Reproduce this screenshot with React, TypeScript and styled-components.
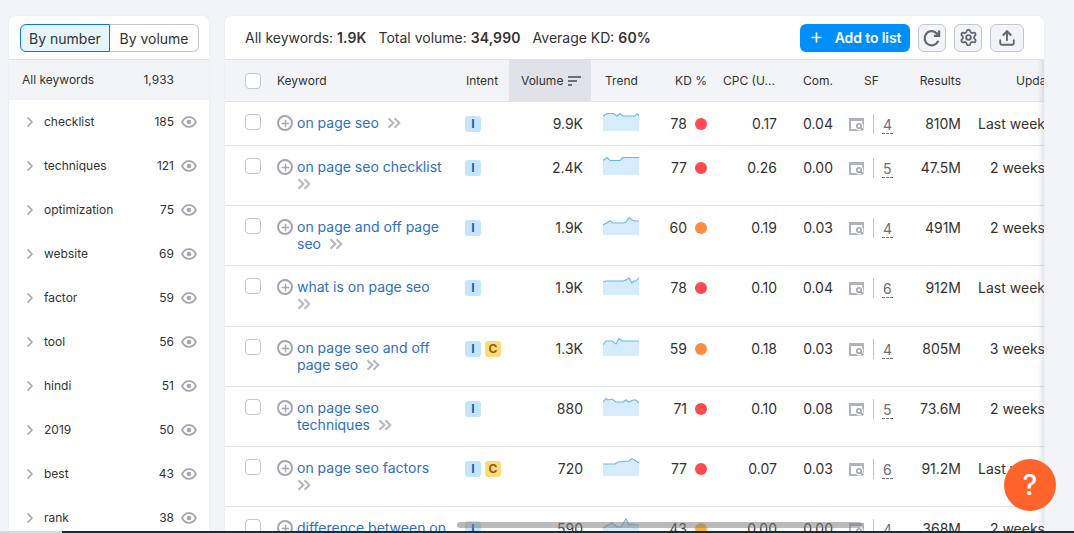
import React from "react";
import styled, { createGlobalStyle } from "styled-components";
import { Plus, ChevronRight, Settings, Upload } from "lucide-react";

const Global = createGlobalStyle`
  html, body { margin: 0; height: 100%; overflow: hidden; background: #f3f4f8; }
  body { font-family: Inter, "Liberation Sans", sans-serif; color: #333; }
  #root { height: 100%; }
`;
const Page = styled.div`
  display: flex; gap: 16px; height: 100%; padding: 16px 30px 0 9px; box-sizing: border-box;
`;
const Card = styled.section`
  background: #fff; border-radius: 6px 6px 0 0; overflow: hidden; box-shadow: 0 0 1px rgba(100,105,130,.25);
`;
const Side = styled(Card)` width: 200px; flex: none; `;
const Main = styled(Card)` flex: 1; min-width: 0; position: relative; `;
const SideTop = styled.div` height: 44px; padding: 8px 10px 0 11px; box-sizing: border-box; border-bottom: 1px solid #e0e1e9; display: flex; `;
const Seg = styled.div<{ $on?: boolean }>`
  height: 28px; box-sizing: border-box; display: flex; align-items: center; justify-content: center;
  font-size: 14px; color: #333;
  width: ${p => (p.$on ? "90px" : "89px")};
  background: ${p => (p.$on ? "#e6f4fd" : "#fff")};
  border: 1px solid ${p => (p.$on ? "#0a7bc6" : "#c4c7cf")};
  border-left-width: ${p => (p.$on ? "1px" : "0")};
  border-radius: ${p => (p.$on ? "6px 0 0 6px" : "0 6px 6px 0")};
`;
const AllRow = styled.div`
  height: 40px; box-sizing: border-box; background: #f3f4f8; display: flex; align-items: center; padding: 0 35px 2px 13px;
  justify-content: space-between; font-size: 12px; color: #333;
`;
const GroupRow = styled.div`
  height: 44px; display: grid; grid-template-columns: 22px 1fr auto 23px; align-items: center; padding: 0 12px 2px 13px;
  font-size: 12px; color: #333; box-sizing: border-box;
`;
const Chevron = styled(ChevronRight)` color: #a4a6b2; margin-top: 2px; `;
const EyeSvg = styled.svg` justify-self: end; display: block; margin-top: 2px; `;
const Summary = styled.div`
  height: 44px; box-sizing: border-box; border-bottom: 1px solid #e0e1e9; display: flex; align-items: center; padding: 0 20px 0 20px;
  font-size: 14px; color: #333;
`;
const Stat = styled.span` margin-right: 12px; b { font-weight: 600; letter-spacing: .1px; } `;
const Spacer = styled.div` flex: 1; `;
const AddBtn = styled.button`
  width: 110px; height: 28px; border: 0; border-radius: 6px; background: #008ff8; color: #fff; font: 600 14px Inter, sans-serif; letter-spacing: -.1px;
  display: flex; align-items: center; justify-content: center; gap: 11px; margin-right: 8px; padding: 0;
`;
const IconBtn = styled.button<{ $w: number }>`
  width: ${p => p.$w}px; height: 28px; box-sizing: border-box; border: 1px solid #c4c7cf; border-radius: 6px; background: #f3f4f8; color: #63656f;
  display: flex; align-items: center; justify-content: center; margin-left: 8px; padding: 0;
`;
const FirstIconBtn = styled(IconBtn)` margin-left: 0; `;
const cols = "52px 188px 44px 82px 60px 62px 70px 56px 61px 67px 99px";
const HeadRow = styled.div`
  display: grid; grid-template-columns: ${cols}; height: 42px; background: #f3f4f8; border-bottom: 1px solid #e0e1e9; box-sizing: border-box;
  font-size: 12px; color: #333; align-items: center; width: 841px;
`;
const H = styled.div<{ $r?: boolean; $pr?: number; $pl?: number }>`
  text-align: ${p => (p.$r ? "right" : "left")}; padding-right: ${p => p.$pr ?? 0}px; padding-left: ${p => p.$pl ?? 0}px; white-space: nowrap;
`;
const VolH = styled(H)`
  background: #e0e1e9; align-self: stretch; display: flex; align-items: center; gap: 5px; padding-left: 12px;
`;
const Check = styled.span`
  display: block; width: 16px; height: 16px; border: 1px solid #c4c7cf; border-radius: 4px; box-sizing: border-box; background: #fff; margin-left: 20px;
`;
const Row = styled.div<{ $h: number }>`
  display: grid; grid-template-columns: ${cols}; width: 841px; height: ${p => p.$h}px; box-sizing: border-box; border-bottom: 1px solid #e0e1e9;
  padding-top: 12px; font-size: 14px; color: #333; line-height: 17px;
`;
const KeyCell = styled.div` display: flex; align-items: flex-start; gap: 4px; `;
const AddCircle = styled.span`
  flex: none; width: 16px; height: 16px; margin-top: 1px; box-sizing: border-box; border: 2px solid #a4a6b2; border-radius: 50%; color: #a4a6b2;
  display: flex; align-items: center; justify-content: center;
`;
const KeyText = styled.div` width: 150px; color: #2e6fc7; `;
const MoreSvg = styled.svg<{ $wrap?: boolean }>`
  vertical-align: -1px; margin-left: ${p => (p.$wrap ? "0" : "8px")};
`;
const Badges = styled.div` display: flex; gap: 4px; padding-top: 2px; `;
const Badge = styled.span<{ $c?: boolean }>`
  width: 16px; height: 16px; border-radius: 3px; display: flex; align-items: center; justify-content: center; font-size: 12px; font-weight: 700; line-height: 1;
  background: ${p => (p.$c ? "#fcdb7c" : "#c4e5fe")}; color: ${p => (p.$c ? "#8f5b0a" : "#1f5fa8")};
`;
const Num = styled.div<{ $pr?: number }>` text-align: right; padding-right: ${p => p.$pr ?? 0}px; padding-top: 1px; white-space: nowrap; `;
const Spark = styled.svg` display: block; margin: -1px 0 0 12px; `;
const KdCell = styled.div` display: flex; justify-content: flex-end; align-items: center; gap: 8px; padding-right: 6px; height: 19px; `;
const Dot = styled.span<{ $c: string }>` width: 12px; height: 12px; border-radius: 50%; background: ${p => p.$c}; `;
const SfCell = styled.div` display: flex; padding-left: 10px; `;
const SfDivider = styled.span` width: 1px; height: 20px; background: #c4c7cf; margin: 0 8px 0 9px; `;
const SfNum = styled.span` color: #6c6e79; border-bottom: 1px dashed #6c6e79; height: 17px; margin-top: 2px; padding: 0 1px; `;
const SfSvg = styled.svg` display: block; margin-top: 4px; `;
const HelpBtn = styled.div`
  position: fixed; left: 1004px; top: 459px; width: 52px; height: 52px; border-radius: 50%; background: #ff642d; color: #fff;
  display: flex; align-items: center; justify-content: center; font-size: 28px; font-weight: 500; z-index: 3;
`;
const ScrollThumb = styled.div`
  position: fixed; left: 457px; top: 522px; width: 405px; height: 6px; border-radius: 3px; background: rgba(130,130,130,.55); z-index: 2;
`;
const EdgeShade = styled.div`
  position: absolute; right: 0; top: 44px; bottom: 0; width: 6px; background: linear-gradient(to right, rgba(120,125,140,0), rgba(120,125,140,.2)); z-index: 1;
`;
const TaskBar = styled.div`
  position: fixed; left: 62px; right: 0; bottom: 0; height: 2px; background: #1d2a30; z-index: 4;
`;
const TaskBarLeft = styled.div`
  position: fixed; left: 0; width: 62px; bottom: 0; height: 2px; background: #d8d9dd; z-index: 4;
`;

const groups: [string, number][] = [
  ["checklist", 185], ["techniques", 121], ["optimization", 75], ["website", 69], ["factor", 59],
  ["tool", 56], ["hindi", 51], ["2019", 50], ["best", 43], ["rank", 38],
];

type R = { k: string; h: number; wrap?: boolean; c?: boolean; v: string; t: string; kd: number; col: string; cpc: string; com: string; sf: number; res: string; up: string };
const RED = "#ff4953", ORG = "#ff8c43", YEL = "#f3b13e";
const rows: R[] = [
  { k: "on page seo", h: 44, v: "9.9K", t: "0,3 4,0.5 10,0.5 14,3 17,0.5 20,3 32,3 34,0.5 36,3", kd: 78, col: RED, cpc: "0.17", com: "0.04", sf: 4, res: "810M", up: "Last week" },
  { k: "on page seo checklist", h: 60, wrap: true, v: "2.4K", t: "0,3.5 4,0.5 7,3.5 17,3.5 20,0.5 36,0.5", kd: 77, col: RED, cpc: "0.26", com: "0.00", sf: 5, res: "47.5M", up: "2 weeks" },
  { k: "on page and off page seo", h: 60, v: "1.9K", t: "0,8 7,4 10,6 20,6 23,5 26,0.5 29,3 32,4 36,4", kd: 60, col: ORG, cpc: "0.19", com: "0.03", sf: 4, res: "491M", up: "2 weeks" },
  { k: "what is on page seo", h: 61, wrap: true, v: "1.9K", t: "0,5 3,4 20,4 23,3 26,1 29,6 31,4 33,4 36,0.5", kd: 78, col: RED, cpc: "0.10", com: "0.04", sf: 6, res: "912M", up: "Last week" },
  { k: "on page seo and off page seo", h: 60, c: true, v: "1.3K", t: "0,7 3,3 9,3 13,6 16,0.5 19,3 36,3", kd: 59, col: ORG, cpc: "0.18", com: "0.03", sf: 4, res: "805M", up: "3 weeks" },
  { k: "on page seo techniques", h: 60, v: "880", t: "0,4 3,0.5 5,2 9,1 13,4 20,4 23,2 26,4 30,2 33,2 36,5", kd: 71, col: RED, cpc: "0.10", com: "0.08", sf: 5, res: "73.6M", up: "2 weeks" },
  { k: "on page seo factors", h: 60, wrap: true, c: true, v: "720", t: "0,6 12,6 15,4 26,3 29,0.5 36,5", kd: 77, col: RED, cpc: "0.07", com: "0.03", sf: 6, res: "91.2M", up: "Last week" },
  { k: "difference between on page and off page seo", h: 60, v: "590", t: "0,10 5,7 9,5 14,9 18,9 23,0.5 26,7 29,6 32,7 36,7", kd: 43, col: YEL, cpc: "0.00", com: "0.00", sf: 4, res: "368M", up: "2 weeks" },
];

const SfIcon = () => (
  <SfSvg width="15" height="13" viewBox="0 0 15 13">
    <path fill="#b0b2bd" fillRule="evenodd" d="M0 0h15v13H0zM2 3v8h11V3z" />
    <circle cx="10.500" cy="8.500" r="3.900" fill="#fff" />
    <rect x="12.500" y="10.500" width="2.500" height="2.500" fill="#fff" />
    <circle cx="10" cy="8" r="2.200" fill="none" stroke="#a8aab6" strokeWidth="1.800" />
    <path d="M11.600 9.600l2.600 2.600" stroke="#a8aab6" strokeWidth="2" />
  </SfSvg>
);

const EyeIcon = () => (
  <EyeSvg width="16" height="12" viewBox="0 0 16 12">
    <path d="M1 6c1.600-3 4-4.800 7-4.800S13.400 3 15 6c-1.600 3-4 4.800-7 4.800S2.600 9 1 6z" fill="none" stroke="#a4a6b2" strokeWidth="1.800" />
    <circle cx="8" cy="6" r="2.300" fill="#a4a6b2" />
  </EyeSvg>
);

const RefreshIcon = () => (
  <svg width="20" height="20" viewBox="0 0 24 24" fill="none" stroke="currentColor" strokeWidth="2.700">
    <path d="M19.500 15.500A8.500 8.500 0 1 1 17.800 6.500L20.500 9" />
    <path d="M20.500 3v6.300h-6.300" />
  </svg>
);

const More = ({ wrap }: { wrap?: boolean }) => (
  <MoreSvg $wrap={wrap} width="14" height="12" viewBox="0 0 14 12">
    <path d="M1.500 1.200L6.300 6l-4.800 4.800M7.500 1.200L12.300 6l-4.800 4.800" fill="none" stroke="#b4b6c0" strokeWidth="2" />
  </MoreSvg>
);

const Sparkline = ({ pts }: { pts: string }) => (
  <Spark width="36" height="18" viewBox="0 0 36 18">
    <polygon points={`0,18 ${pts} 36,18`} fill="#d6ecfd" />
    <polyline points={pts} fill="none" stroke="#6db5f0" strokeWidth="1.100" />
  </Spark>
);

const SortIcon = () => (
  <svg width="13" height="10" viewBox="0 0 13 10">
    <path d="M0 0h13v2H0zM0 4h9v2H0zM0 8h4v2H0z" fill="#6c6e79" />
  </svg>
);

export default function App() {
  return (
    <>
      <Global />
      <Page>
        <Side>
          <SideTop>
            <Seg $on>By number</Seg>
            <Seg>By volume</Seg>
          </SideTop>
          <AllRow><span>All keywords</span><span>1,933</span></AllRow>
          {groups.map(([n, c]) => (
            <GroupRow key={n}>
              <Chevron size={16} strokeWidth={2.6} />
              <span>{n}</span>
              <span>{c}</span>
              <EyeIcon />
            </GroupRow>
          ))}
        </Side>
        <Main>
          <Summary>
            <Stat>All keywords: <b>1.9K</b></Stat>
            <Stat>Total volume: <b>34,990</b></Stat>
            <Stat>Average KD: <b>60%</b></Stat>
            <Spacer />
            <AddBtn><Plus size={15} strokeWidth={2.6} />Add to list</AddBtn>
            <FirstIconBtn $w={28}><RefreshIcon /></FirstIconBtn>
            <IconBtn $w={28}><Settings size={19} strokeWidth={2.3} /></IconBtn>
            <IconBtn $w={34}><Upload size={18} strokeWidth={2.5} /></IconBtn>
          </Summary>
          <HeadRow>
            <Check />
            <H>Keyword</H>
            <H $pl={1}>Intent</H>
            <VolH>Volume <SortIcon /></VolH>
            <H $pl={14}>Trend</H>
            <H $r $pr={6}>KD %</H>
            <H $pl={10}>CPC (U...</H>
            <H $r $pr={6}>Com.</H>
            <H $pl={25}>SF</H>
            <H $r $pr={6}>Results</H>
            <H $pl={49}>Updated</H>
          </HeadRow>
          {rows.map(r => (
            <Row key={r.k} $h={r.h}>
              <Check />
              <KeyCell>
                <AddCircle><Plus size={11} strokeWidth={3} /></AddCircle>
                <KeyText>
                  {r.k}
                  {r.wrap ? <><br /><More wrap /></> : <More />}
                </KeyText>
              </KeyCell>
              <Badges>
                <Badge>I</Badge>
                {r.c && <Badge $c>C</Badge>}
              </Badges>
              <Num $pr={8}>{r.v}</Num>
              <Sparkline pts={r.t} />
              <KdCell>{r.kd}<Dot $c={r.col} /></KdCell>
              <Num $pr={6}>{r.cpc}</Num>
              <Num $pr={6}>{r.com}</Num>
              <SfCell><SfIcon /><SfDivider /><SfNum>{r.sf}</SfNum></SfCell>
              <Num $pr={6}>{r.res}</Num>
              <Num $pr={21}>{r.up}</Num>
            </Row>
          ))}
          <EdgeShade />
        </Main>
      </Page>
      <ScrollThumb />
      <HelpBtn>?</HelpBtn>
      <TaskBarLeft />
      <TaskBar />
    </>
  );
}
